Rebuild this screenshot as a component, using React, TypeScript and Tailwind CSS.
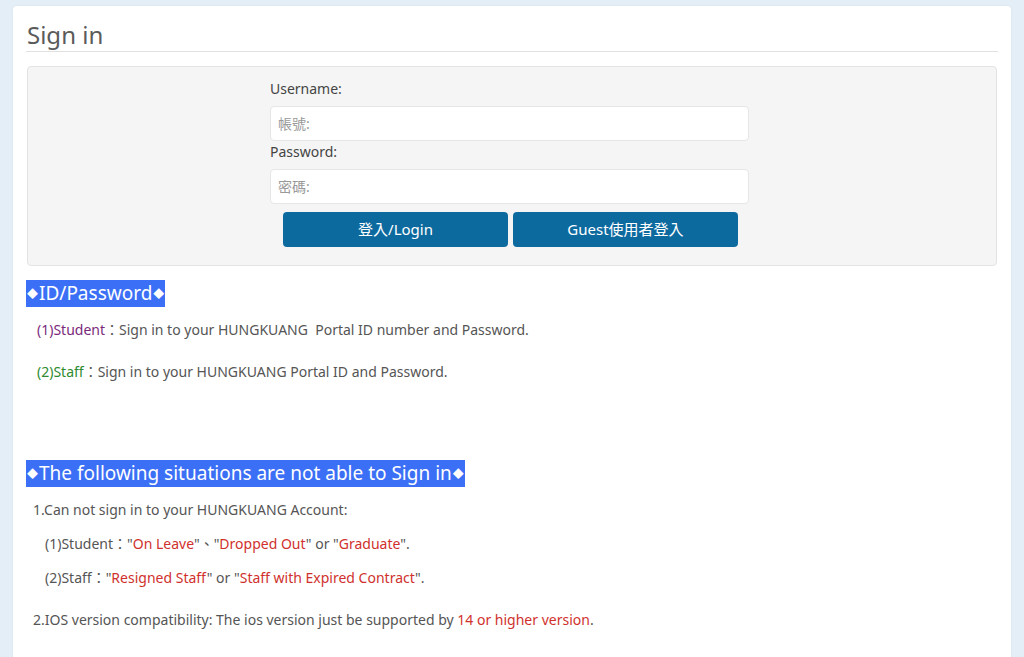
import React from "react";

const font = { fontFamily: '"Noto Sans", "Noto Sans CJK TC", sans-serif' };

function Dia() {
  return <span className="text-[11px] align-[2px] mx-[1px]">◆</span>;
}

export default function App() {
  return (
    <div className="min-h-[657px] w-full bg-[#e4eef6] px-[13px] pt-[6px]" style={font}>
      <div className="bg-white rounded-[4px] shadow-[0_0_2px_rgba(0,0,0,0.08)] px-[13px] pt-[14px] pb-[20px] h-[660px]">
        <h1 className="text-[24px] leading-[30px] text-[#5a5a5a] font-normal pl-[1px] pb-[1px] border-b border-[#e1e1e1]">Sign in</h1>
        <div className="mt-[14px] mx-[1px] bg-[#f5f5f5] border border-[#e3e3e3] rounded-[4px] h-[200px] flex justify-center">
          <div className="w-[479px] mr-[5px] pt-[11px] text-[14px] text-[#444]">
            <label className="block leading-[22px]">Username:</label>
            <input
              className="mt-[6px] block w-full h-[35px] bg-white border border-[#e6e6e6] rounded-[4px] px-[7px] text-[14px] placeholder-[#999] outline-none"
              placeholder="帳號:"
            />
            <label className="block leading-[22px] mt-[0px]">Password:</label>
            <input
              className="mt-[6px] block w-full h-[35px] bg-white border border-[#e6e6e6] rounded-[4px] px-[7px] text-[14px] placeholder-[#999] outline-none"
              placeholder="密碼:"
            />
            <div className="mt-[8px] flex gap-[5px] pl-[13px]">
              <button className="w-[225px] h-[35px] bg-[#0d6a9f] text-white text-[15px] rounded-[4px]">登入/Login</button>
              <button className="w-[225px] h-[35px] bg-[#0d6a9f] text-white text-[15px] rounded-[4px]">Guest使用者登入</button>
            </div>
          </div>
        </div>

        <div className="mt-[14px] text-[14px] text-[#555]">
          <span className="inline-block bg-[#3b6ff6] text-white text-[19px] leading-[26px]">
            <Dia />ID/Password<Dia />
          </span>
          <p className="mt-[12px] pl-[11px] leading-[22px]">
            <span className="text-[#7b2a7b]">(1)Student</span>：Sign in to your HUNGKUANG&nbsp; Portal ID number and Password.
          </p>
          <p className="mt-[20px] pl-[11px] leading-[22px]">
            <span className="text-[#2e8b2e]">(2)Staff</span>：Sign in to your HUNGKUANG Portal ID and Password.
          </p>

          <div className="mt-[77px]">
            <span className="inline-block bg-[#3b6ff6] text-white text-[19px] leading-[26px]">
              <Dia />The following situations are not able to Sign in<Dia />
            </span>
          </div>
          <p className="mt-[12px] pl-[7px] leading-[22px]">1.Can not sign in to your HUNGKUANG Account:</p>
          <p className="mt-[12px] pl-[19px] leading-[22px]">
            (1)Student："<span className="text-[#d0312d]">On Leave</span>"、"<span className="text-[#d0312d]">Dropped Out</span>" or "<span className="text-[#d0312d]">Graduate</span>".
          </p>
          <p className="mt-[12px] pl-[19px] leading-[22px]">
            (2)Staff："<span className="text-[#d0312d]">Resigned Staff</span>" or "<span className="text-[#d0312d]">Staff with Expired Contract</span>".
          </p>
          <p className="mt-[20px] pl-[7px] leading-[22px]">
            2.IOS version compatibility: The ios version just be supported by <span className="text-[#d0312d]">14 or higher version</span>.
          </p>
        </div>
      </div>
    </div>
  );
}
